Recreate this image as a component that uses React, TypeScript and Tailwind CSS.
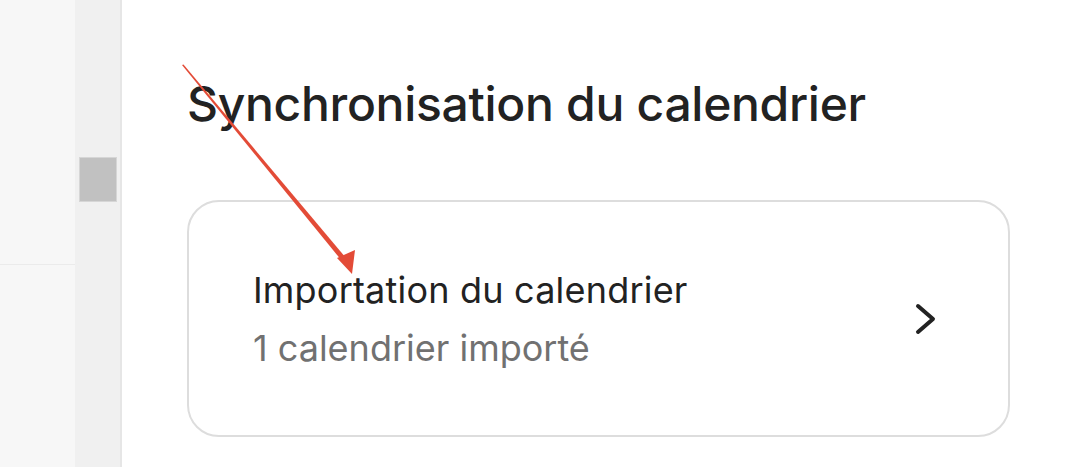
export default function App() {
  return (
    <div
      className="relative flex h-[467px] w-[1073px] overflow-hidden bg-white"
      style={{ fontFamily: "Inter, 'Noto Sans', sans-serif" }}
    >
      {/* left side panel */}
      <div className="flex w-[75px] flex-col bg-[#f7f7f7]">
        <div className="h-[265px] border-b border-[#ebebeb]" />
      </div>

      {/* scrollbar */}
      <div className="w-[47px] border-r-2 border-[#e6e6e6] bg-[#f0f0f0] pt-[157px] pl-[4px]">
        <div className="h-[45px] w-[38px] border border-[#d6d6d6] bg-[#c1c1c1]" />
      </div>

      {/* content */}
      <main className="flex-1 pl-[65px] pt-[76px]">
        <h1 className="text-[48px] leading-[56px] font-medium tracking-[-0.3px] text-[#222222]">
          Synchronisation du calendrier
        </h1>

        <div className="mt-[68px] flex h-[237px] w-[823px] items-center justify-between rounded-[32px] border-2 border-[#dddddd] pl-[64px] pr-[70px]">
          <div className="flex flex-col gap-[14px]">
            <span className="text-[36px] leading-[44px] tracking-[0.2px] text-[#222222]">
              Importation du calendrier
            </span>
            <span className="text-[36px] leading-[44px] text-[#717171]">
              1 calendrier importé
            </span>
          </div>
          <svg width="24" height="34" viewBox="0 0 24 34" fill="none">
            <path
              d="M4 4 L19 17 L4 30"
              stroke="#222222"
              strokeWidth="4"
              strokeLinecap="round"
              strokeLinejoin="round"
            />
          </svg>
        </div>
      </main>

      {/* red annotation arrow */}
      <svg
        className="pointer-events-none absolute left-0 top-0"
        width="1073"
        height="467"
        viewBox="0 0 1073 467"
      >
        <polygon points="182,65 183.5,64.5 346,258 342,261" fill="#e34b37" />
        <polygon points="337,258 355,250 352,274" fill="#e34b37" />
      </svg>
    </div>
  );
}
